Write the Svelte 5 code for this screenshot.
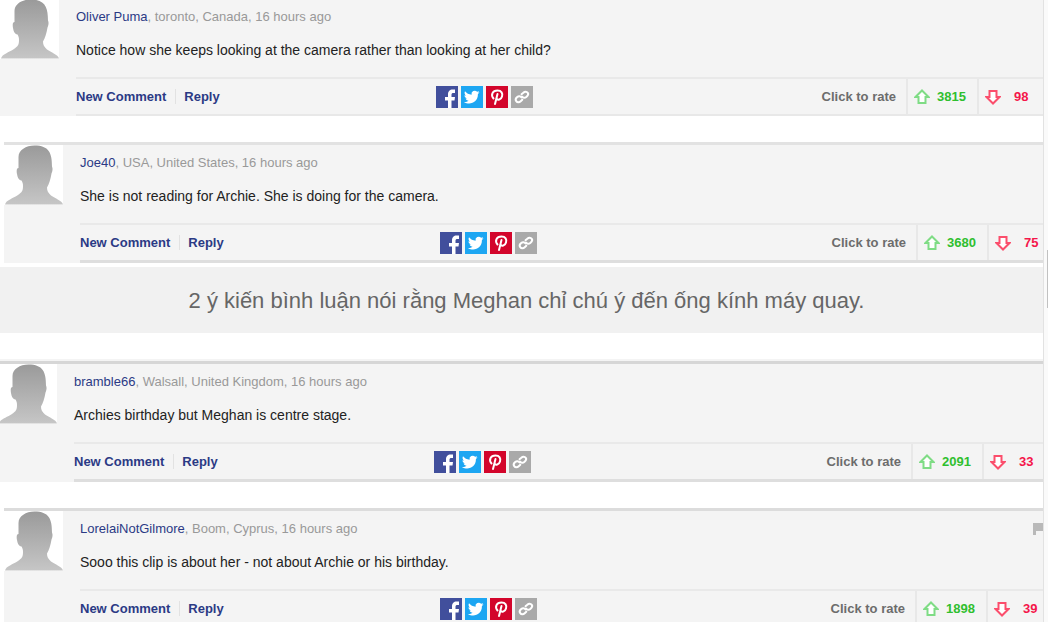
<script lang="ts">
	const before = [
		{slot: 'first', name: 'Oliver Puma', place: 'toronto, Canada', text: 'Notice how she keeps looking at the camera rather than looking at her child?', up: 3815, down: 98},
		{slot: 'second', name: 'Joe40', place: 'USA, United States', text: 'She is not reading for Archie. She is doing for the camera.', up: 3680, down: 75},
	]
	const after = [
		{slot: 'third', name: 'bramble66', place: 'Walsall, United Kingdom', text: 'Archies birthday but Meghan is centre stage.', up: 2091, down: 33},
		{slot: 'fourth', name: 'LorelaiNotGilmore', place: 'Boom, Cyprus', text: 'Sooo this clip is about her - not about Archie or his birthday.', up: 1898, down: 39, flagged: true},
	]
</script>

{#snippet comment(c)}
	<article class="comment {c.slot}">
		<svg class="avatar" viewBox="0 0 59 60" aria-hidden="true">
			<defs>
				<linearGradient id="shade-{c.slot}" x1="0" y1="0" x2="0" y2="1">
					<stop offset="0" stop-color="#9a9a9a"/>
					<stop offset="1" stop-color="#c6c6c6"/>
				</linearGradient>
			</defs>
			<path fill="url(#shade-{c.slot})" d="M30.500 .5C22 .5 14.500 5 14.500 12v11c-2 0-2 3-1.500 6s1.500 6 4.500 6.500c1 2 1.500 3 1.500 5.500 0 5-1 6-5 9-5 3.500-12 5-13 9.500h58c-1-4-8-6-12-9-3-2.500-4-5-4-8 2-3.500 3.500-8 4.500-14 1-2 1.500-5 .5-7C48 8 45 .5 30.500 .5z"/>
		</svg>
		<div class="content">
			<p class="meta"><a href="#user">{c.name}</a>, {c.place}, 16 hours ago</p>
			<p class="text">{c.text}</p>
			<div class="bar">
				<div class="actions">
					<button>New Comment</button>
					<button class="reply">Reply</button>
				</div>
				<div class="share">
					<a class="facebook" href="#facebook" aria-label="Facebook">
						<svg viewBox="0 0 22 22"><path fill="#fff" d="M12 22v-7.500H9V11h3V8.500c0-3.500 2-5 4.500-5H19V7h-1.500c-1.500 0-2 .6-2 1.800V11H19l-.5 3.500h-3V22z"/></svg>
					</a>
					<a class="twitter" href="#twitter" aria-label="Twitter">
						<svg viewBox="0 0 22 22"><path fill="#fff" d="M18.500 6.200c-.6.3-1.200.4-1.800.5.700-.4 1.100-1 1.400-1.700-.6.400-1.300.600-2 .8a3.200 3.200 0 0 0-5.500 2.900C7.900 8.500 5.600 7.300 4 5.300c-.9 1.500-.4 3.300 1 4.300-.5 0-1-.2-1.500-.4 0 1.600 1.100 2.900 2.600 3.200-.5.100-1 .1-1.500 0 .4 1.300 1.600 2.200 3 2.300-1.300 1-3 1.500-4.700 1.300 6.500 4 14-.2 14-7.400v-.6c.6-.5 1.200-1 1.600-1.800z"/></svg>
					</a>
					<a class="pinterest" href="#pinterest" aria-label="Pinterest">
						<svg viewBox="0 0 22 22"><path fill="none" stroke="#fff" stroke-width="2" stroke-linecap="round" d="M7.500 12.500C4.500 9 6.500 4.500 11.500 4.500c4 0 5.500 3 4.500 6-1 3.500-4.500 4-5.500 2M11.500 8 9 18"/></svg>
					</a>
					<a class="link" href="#link" aria-label="Copy link">
						<svg viewBox="0 0 22 22"><g fill="none" stroke="#fff" stroke-width="2" stroke-linecap="round"><path d="M10.500 11.500c-1-1.500-3-1.500-4.300-.4s-2.200 2.500-1 4.100 3.200 1.300 4.500.1l1.600-1.500"/><path d="M11 10.500c1 1.500 3 1.500 4.300.4s2.700-2.500 1.500-4.100-3.200-1.300-4.500-.1L10.500 8.200"/></g></svg>
					</a>
				</div>
				<span class="rate">Click to rate</span>
				<button class="vote up" aria-label="Vote up {c.up}">
					<svg viewBox="0 0 16 16"><path d="M8 1.500 14.500 8H11.500v6h-7V8H1.500z"/></svg>
					<span>{c.up}</span>
				</button>
				<button class="vote down" aria-label="Vote down {c.down}">
					<svg viewBox="0 0 16 16"><path d="M8 14.500 1.500 8H4.500V2h7v6h3z"/></svg>
					<span>{c.down}</span>
				</button>
			</div>
		</div>
		{#if c.flagged}
			<button class="flag" aria-label="Report">
				<svg viewBox="0 0 10 12"><path fill="#b9b9b9" d="M0 0h10v8H3v4H0z"/></svg>
			</button>
		{/if}
	</article>
{/snippet}

<div class="page">
	<main>
		{#each before as c}
			{@render comment(c)}
		{/each}
		<p class="caption">2 ý kiến bình luận nói rằng Meghan chỉ chú ý đến ống kính máy quay.</p>
		{#each after as c}
			{@render comment(c)}
		{/each}
	</main>
	<div class="thumb"></div>
</div>

<style>
	:global(body) {
		background: #fafafa;
		font-family: "Liberation Sans", Arial, sans-serif;
	}

	.page {
		position: relative;
		height: 100vh;
		overflow: hidden;
	}

	main {
		margin-right: 4px;
		border-right: 1px solid #e2e2e2;
		background: #fff;
		overflow: hidden;
	}

	p {
		margin: 0;
	}

	button {
		padding: 0;
		border: 0;
		background: none;
		font: inherit;
		color: inherit;
		cursor: pointer;
	}

	a {
		color: #2b3a85;
		text-decoration: none;
	}

	.comment {
		display: flex;
		position: relative;
		gap: 17px;
		background: #f4f4f4;
		border-top: 3px solid #dcdcdc;
	}

	.first {
		margin-top: -4px;
		--last: 66px;
	}

	.second {
		margin: 26px 0 4px 4px;
		border-top-color: #e2e2e2;
		--last: 56px;
		--line: 3px;
	}

	.third {
		margin: 28px 0 26px -2px;
		border-top-color: #d6d6d6;
		box-shadow: 0 -2px #f4f4f4;
		--last: 61px;
		--line: 3px;
	}

	.fourth {
		margin-left: 4px;
		--last: 57px;
	}

	.avatar {
		flex: none;
		width: 59px;
		height: 60px;
		background: #fff;
	}

	.content {
		flex: 1;
		border-bottom: var(--line, 2px) solid #dedede;
	}

	.first .content {
		border-bottom-color: #e8e8e8;
	}

	.meta {
		padding-top: 9px;
		font-size: 13px;
		line-height: 17px;
		color: #999;
	}

	.text {
		padding: 16px 0 17px;
		font-size: 14px;
		line-height: 19px;
		color: #222;
	}

	.bar {
		display: flex;
		align-items: center;
		height: 35px;
		border-top: 2px solid #e9e9e9;
		font-size: 13px;
		font-weight: bold;
	}

	.actions {
		display: flex;
		width: 360px;
		color: #2b3a85;
	}

	.reply {
		margin-left: 9px;
		padding-left: 8px;
		border-left: 1px solid #e2e2e2;
	}

	.share {
		display: flex;
		flex: 1;
		gap: 3px;
	}

	.share a {
		width: 22px;
		height: 22px;
	}

	.share svg, .flag svg {
		display: block;
	}

	.facebook {
		background: #414f9c;
	}

	.twitter {
		background: #1da6f2;
	}

	.pinterest {
		background: #d3052b;
	}

	.link {
		background: #a9a9a9;
	}

	.rate {
		margin-right: 10px;
		color: #6c6c6c;
	}

	.vote {
		display: flex;
		box-sizing: border-box;
		align-items: center;
		gap: 7px;
		height: 100%;
		padding-left: 6px;
		border-left: 2px solid #e8e8e8;
	}

	.vote svg {
		flex: none;
		width: 16px;
		height: 16px;
		fill: #fff;
		stroke-width: 2;
	}

	.up {
		width: 71px;
		color: #2fbf2f;
	}

	.up svg {
		stroke: #7fdc85;
	}

	.down {
		gap: 13px;
		width: var(--last);
		color: #f5164a;
	}

	.down svg {
		stroke: #fb4e6c;
	}

	.flag {
		position: absolute;
		top: 12px;
		right: 0;
		width: 10px;
	}

	.caption {
		padding: 20px 10px 19px 20px;
		background: #f1f1f1;
		color: #666;
		font-size: 22px;
		line-height: 27px;
		text-align: center;
	}

	.thumb {
		position: absolute;
		top: 250px;
		right: 0;
		width: 1px;
		height: 58px;
		background: #c1c1c1;
	}
</style>
